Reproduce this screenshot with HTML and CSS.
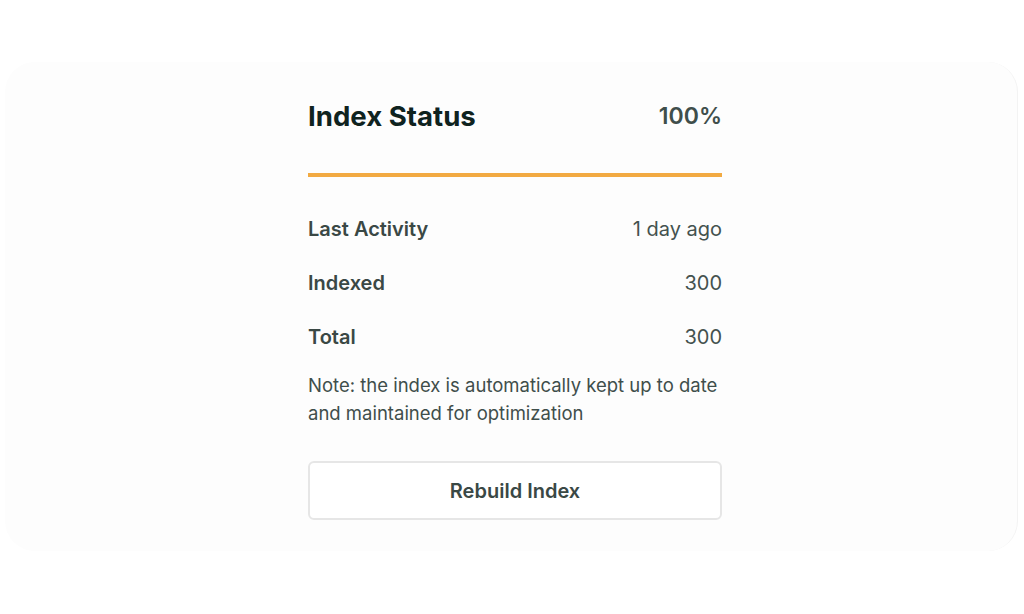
FILE: index.html
```html
<!DOCTYPE html>
<html lang="en">
  <head>
    <meta charset="UTF-8" />
    <meta name="viewport" content="width=device-width, initial-scale=1.0"/>
    <title>Index Status</title>
    <link rel="stylesheet" href="styles.css">
  </head>
  <body>
    <div class="card">
      <div class="status">
        <div class="status-head">
          <h1>Index Status</h1>
          <span class="percent">100%</span>
        </div>
        <div class="progress"><div class="progress-fill" style="width: 100%"></div></div>

        <div class="rows">
          <div class="row">
            <span class="label">Last Activity</span>
            <span class="value">1 day ago</span>
          </div>
          <div class="row">
            <span class="label">Indexed</span>
            <span class="value">300</span>
          </div>
          <div class="row">
            <span class="label">Total</span>
            <span class="value">300</span>
          </div>
        </div>

        <p class="note">Note: the index is automatically kept up to date and maintained for optimization</p>

        <button class="rebuild" type="button">Rebuild Index</button>
      </div>
    </div>
  </body>
</html>
```

FILE: styles.css
```css
body {
  font-family: Inter, "Noto Sans", sans-serif;
  background-color: #ffffff;
  color: #3f4e4b;
  margin: 0;
  padding: 0;
}

.card {
  margin: 62px 6px 0 5px;
  height: 489px;
  box-sizing: border-box;
  padding: 38px 0 31px 303px;
  background-color: #fdfdfd;
  border-radius: 30px;
  border-right: 1px solid #f3f3f3;
}

.status {
  width: 414px;
}

.status-head {
  display: flex;
  justify-content: space-between;
  align-items: center;
  height: 32px;
}
.status-head h1 {
  margin: 0;
  font-size: 27.6px;
  font-weight: 700;
  color: #0f231f;
}
.percent {
  font-size: 23px;
  font-weight: 600;
  color: #3f4e4b;
}

.progress {
  margin-top: 41px;
  height: 4px;
  background-color: #eeeeee;
}
.progress-fill {
  height: 100%;
  background-color: #f2aa42;
}

.rows {
  margin-top: 25px;
}
.row {
  display: flex;
  justify-content: space-between;
  align-items: center;
  height: 54px;
  font-size: 20px;
}
.label {
  font-weight: 600;
  color: #3a4845;
}
.value {
  font-weight: 400;
  color: #44524f;
}

.note {
  margin: 7px 0 0;
  font-size: 18.5px;
  line-height: 28px;
  color: #3f4e4b;
}

.rebuild {
  display: block;
  width: 100%;
  height: 59px;
  margin-top: 34px;
  background-color: #ffffff;
  border: 2px solid #e6e6e6;
  border-radius: 6px;
  font-family: Inter, "Noto Sans", sans-serif;
  font-size: 20px;
  font-weight: 600;
  color: #3a4845;
  cursor: pointer;
}
```
